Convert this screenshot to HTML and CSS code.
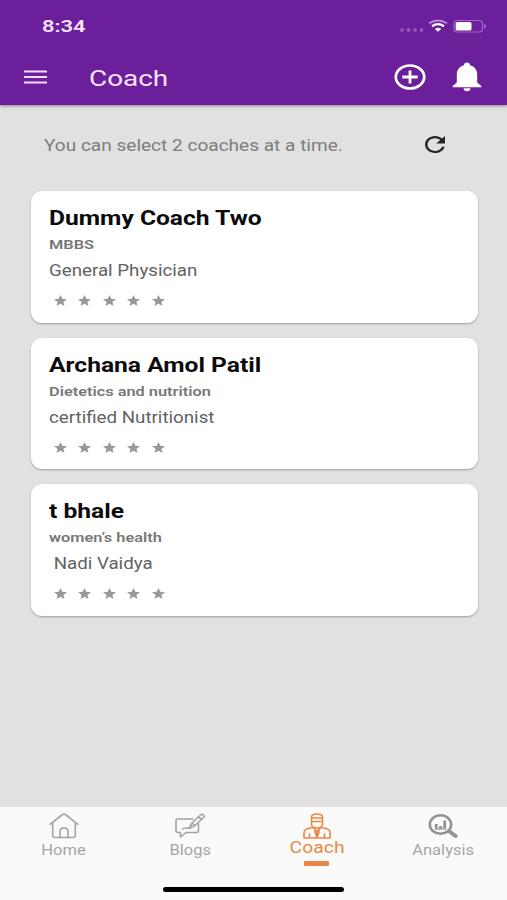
FILE: index.html
```html
<!DOCTYPE html>
<html lang="en">
<head>
<meta charset="utf-8">
<title>Coach</title>
<link rel="stylesheet" href="styles.css">
</head>
<body>
<svg width="0" height="0" class="defs" aria-hidden="true">
  <symbol id="star" viewBox="2 2 20 19" preserveAspectRatio="none"><path d="M12 17.3 18.2 21l-1.7-7L22 9.2l-7.200-.6L12 2 9.200 8.600 2 9.200 7.500 14l-1.700 7z"/></symbol>
</svg>
<div class="screen">
  <header class="header">
    <div class="status">
      <span class="t time">8:34</span>
      <svg class="status-icons" width="90" height="16" viewBox="0 0 90 16">
        <g fill="#9355be"><circle cx="5" cy="12" r="1.900"/><circle cx="11.500" cy="12" r="1.900"/><circle cx="18" cy="12" r="1.900"/><circle cx="24.500" cy="12" r="1.900"/></g>
        <path d="M32 5.300Q41 -.3 50 5.300" fill="none" stroke="#b98ad8" stroke-width="1.800"/>
        <path d="M35 8.200Q41 4.200 47 8.200" fill="none" stroke="#fff" stroke-width="2.300"/>
        <path d="M37.800 11Q41 8.700 44.200 11L41 13.700z" fill="#fff"/>
        <rect x="57" y="2.500" width="28.500" height="11.500" rx="3.300" fill="none" stroke="#a064c8" stroke-width="1.200"/>
        <rect x="58.700" y="4" width="15.800" height="8.600" rx="1.500" fill="#fff"/>
        <path d="M87 6v4.500q2-.8 2-2.200T87 6z" fill="#a773cc"/>
      </svg>
    </div>
    <div class="bar">
      <svg class="menu" width="23" height="14" viewBox="0 0 23 14"><path d="M0 1.500h23M0 7h23M0 12.500h23" stroke="#f3dcff" stroke-width="2"/></svg>
      <h1 class="t title">Coach</h1>
      <svg class="add" width="32" height="26" viewBox="0 0 32 26"><ellipse cx="16" cy="13" rx="14.200" ry="11.500" fill="none" stroke="#fff" stroke-width="2.700"/><path d="M8.300 13h15.400M16 6.500v13" stroke="#fff" stroke-width="2.800"/></svg>
      <svg class="bell" width="30" height="30" viewBox="0 0 30 30"><path fill="#fff" d="M15 .5c-1.900 0-3 1.100-3 2.700C7.500 4.300 4.800 8 4.800 12.500v8L.7 24v1.200h28.600V24l-4.100-3.500v-8C25.200 8 22.500 4.300 18 3.200 18 1.600 16.900.5 15 .5zM11.500 26.300h7c0 1.900-1.500 2.900-3.500 2.900s-3.500-1-3.500-2.900z"/></svg>
    </div>
  </header>
  <main class="content">
    <div class="notice">
      <p class="t hint">You can select 2 coaches at a time.</p>
      <svg class="refresh" width="20" height="17" viewBox="4 4 16 16" preserveAspectRatio="none"><path fill="#242424" d="M17.650 6.350C16.200 4.900 14.210 4 12 4c-4.420 0-7.990 3.580-7.990 8s3.570 8 7.990 8c3.730 0 6.840-2.550 7.730-6h-2.080c-.82 2.330-3.040 4-5.650 4-3.310 0-6-2.690-6-6s2.690-6 6-6c1.660 0 3.140.69 4.220 1.780L13 11h7V4l-2.350 2.350z"/></svg>
    </div>
    <section class="cards">
      <article class="card">
        <h2 class="t name">Dummy Coach Two</h2>
        <p class="t degree">MBBS</p>
        <p class="t role">General Physician</p>
        <div class="stars"><svg><use href="#star"/></svg><svg><use href="#star"/></svg><svg><use href="#star"/></svg><svg><use href="#star"/></svg><svg><use href="#star"/></svg></div>
      </article>
      <article class="card">
        <h2 class="t name">Archana Amol Patil</h2>
        <p class="t degree">Dietetics and nutrition</p>
        <p class="t role">certified Nutritionist</p>
        <div class="stars"><svg><use href="#star"/></svg><svg><use href="#star"/></svg><svg><use href="#star"/></svg><svg><use href="#star"/></svg><svg><use href="#star"/></svg></div>
      </article>
      <article class="card">
        <h2 class="t name">t bhale</h2>
        <p class="t degree">women’s health</p>
        <p class="t role">&nbsp;Nadi Vaidya</p>
        <div class="stars"><svg><use href="#star"/></svg><svg><use href="#star"/></svg><svg><use href="#star"/></svg><svg><use href="#star"/></svg><svg><use href="#star"/></svg></div>
      </article>
    </section>
  </main>
  <footer class="footer">
    <nav class="tabs">
      <a class="tab">
        <svg width="30" height="26" viewBox="0 0 30 26" fill="none" stroke="#a3a3a3" stroke-width="1.600" stroke-linejoin="round" stroke-linecap="round"><path d="M1.200 11.300 13.500 1.500q1.500-1 3 0L28.800 11.300M3.700 10v12.500q0 2 2.300 2h18q2.300 0 2.300-2V10M11 24.500v-6q0-3.500 4-3.500t4 3.500v6"/></svg>
        <span class="t label">Home</span>
      </a>
      <a class="tab">
        <svg width="30" height="26" viewBox="0 0 30 26" fill="none" stroke="#a3a3a3" stroke-width="1.600" stroke-linejoin="round" stroke-linecap="round"><path d="M18 6H3Q1 6 1 8v9.500q0 2 2 2h2.500v4.500l5.500-4.500h10.500q2 0 2-2V11M14 15.500 17 10 25.500 2q1.500-1.200 3 0t0 2.500L20 12.500zM17 10l3 2.500M23.500 3.800l3 2.500M7.500 16q3-1.700 6.500-.5"/></svg>
        <span class="t label">Blogs</span>
      </a>
      <a class="tab active">
        <svg width="28" height="26" viewBox="0 0 28 26" fill="none" stroke="#ea8744" stroke-width="1.600" stroke-linejoin="round" stroke-linecap="round"><path d="M8.500 4Q8.500 1 14 1t5.500 3v7q0 4-5.500 4T8.500 11zM8.500 5h11M8.500 8.500h11M10.500 14.500 5 15.500q-4 1-4 4.500V25h26v-5q0-3.500-4-4.500l-5.500-1M10.500 14.500 14 19l3.500-4.500M12 17v2l2 5.500 2-5.500v-2M6.500 25v-4M21.500 25v-4M14 19v5"/></svg>
        <span class="t label">Coach</span>
        <i class="marker"></i>
      </a>
      <a class="tab">
        <svg width="30" height="26" viewBox="0 0 30 26" fill="none" stroke="#929292"><ellipse cx="12.500" cy="11.500" rx="10.700" ry="9.300" stroke-width="2.600"/><path d="m21.500 18.500 6 4.500" stroke-width="4" stroke-linecap="round"/><path d="M8.200 15.500V11M12.500 16V13M16.700 15.500V7.500" stroke-width="2.800"/><path d="M7 16h11.500" stroke-width="1.200"/></svg>
        <span class="t label">Analysis</span>
      </a>
    </nav>
    <div class="home-indicator"></div>
  </footer>
</div>
</body>
</html>
```
FILE: styles.css
```css
* { box-sizing: border-box; }
body { margin: 0; font-family: Roboto, "Liberation Sans", sans-serif; }
.defs { display: none; }
h1, h2, p { margin: 0; }
svg { display: block; flex: none; }
.screen { width: 507px; height: 900px; display: flex; flex-direction: column; background: #e1e1e1; overflow: hidden; }

/* Wide letterforms: every text run is stretched from its left edge. */
.t { display: block; width: max-content; white-space: nowrap; transform: scaleX(1.22); transform-origin: left center; }

.header { height: 105px; background: #6b1f9b; box-shadow: 0 1px 3px rgba(0,0,0,.4); }
.status { height: 52px; display: flex; justify-content: space-between; padding: 0 20px 0 42px; align-items: center; }
.time { font-size: 17px; font-weight: 600; color: #f6e4ff; line-height: 20px; transform: scaleX(1.29); }
.bar { height: 50px; display: flex; align-items: center; padding: 0 25px 0 24px; }
.title { margin: 2px 0 0 41.500px; font-size: 22.500px; font-weight: 450; color: #f6e4ff; line-height: 26px; transform: scaleX(1.24); }
.add { margin-left: auto; }
.bell { margin-left: 26px; }

.content { flex: 1; padding: 0 29.500px 0 30.500px; }
.notice { height: 86px; padding: 0 33px 6px 13.500px; display: flex; align-items: center; justify-content: space-between; }
.hint { margin-top: 2px; font-size: 16px; color: #7d7d7d; line-height: 20px; transform: scaleX(1.19); }
.refresh { margin-top: -1px; }
.cards { display: flex; flex-direction: column; gap: 15px; }
.card { height: 131.500px; padding: 13px 18px 0; background: #fff; border-radius: 11px; box-shadow: 0 1px 2px rgba(0,0,0,.3); }
.name { font-size: 20px; font-weight: 700; color: #0b0b0b; line-height: 28px; transform: scaleX(1.23); }
.degree { font-size: 13.500px; font-weight: 600; color: #777; line-height: 24px; transform: scaleX(1.21); }
.role { margin-top: 1px; font-size: 16px; color: #626262; line-height: 28px; transform: scaleX(1.17); }
.stars { display: flex; gap: 11.500px; padding: 10px 0 0 5px; }
.stars svg { width: 13px; height: 11px; fill: #999; }

.footer { height: 93px; background: #fafafa; }
.tabs { height: 78px; display: grid; grid-template-columns: repeat(4, 126.500px); }
.tab { display: flex; flex-direction: column; align-items: center; padding: 6px 0 0 1px; }
.label { transform: scaleX(1.14); transform-origin: center; font-size: 14.500px; line-height: 18px; margin-top: 3px; color: #a6a6a6; }
.active .label { font-size: 17px; color: #ea8744; margin-top: -1px; }
.marker { width: 25px; height: 5px; margin-top: 5px; border-radius: 1px; background: #ea8744; }
.home-indicator { width: 181px; height: 5px; margin: 2px auto 0; border-radius: 3px; background: #000; }
```
